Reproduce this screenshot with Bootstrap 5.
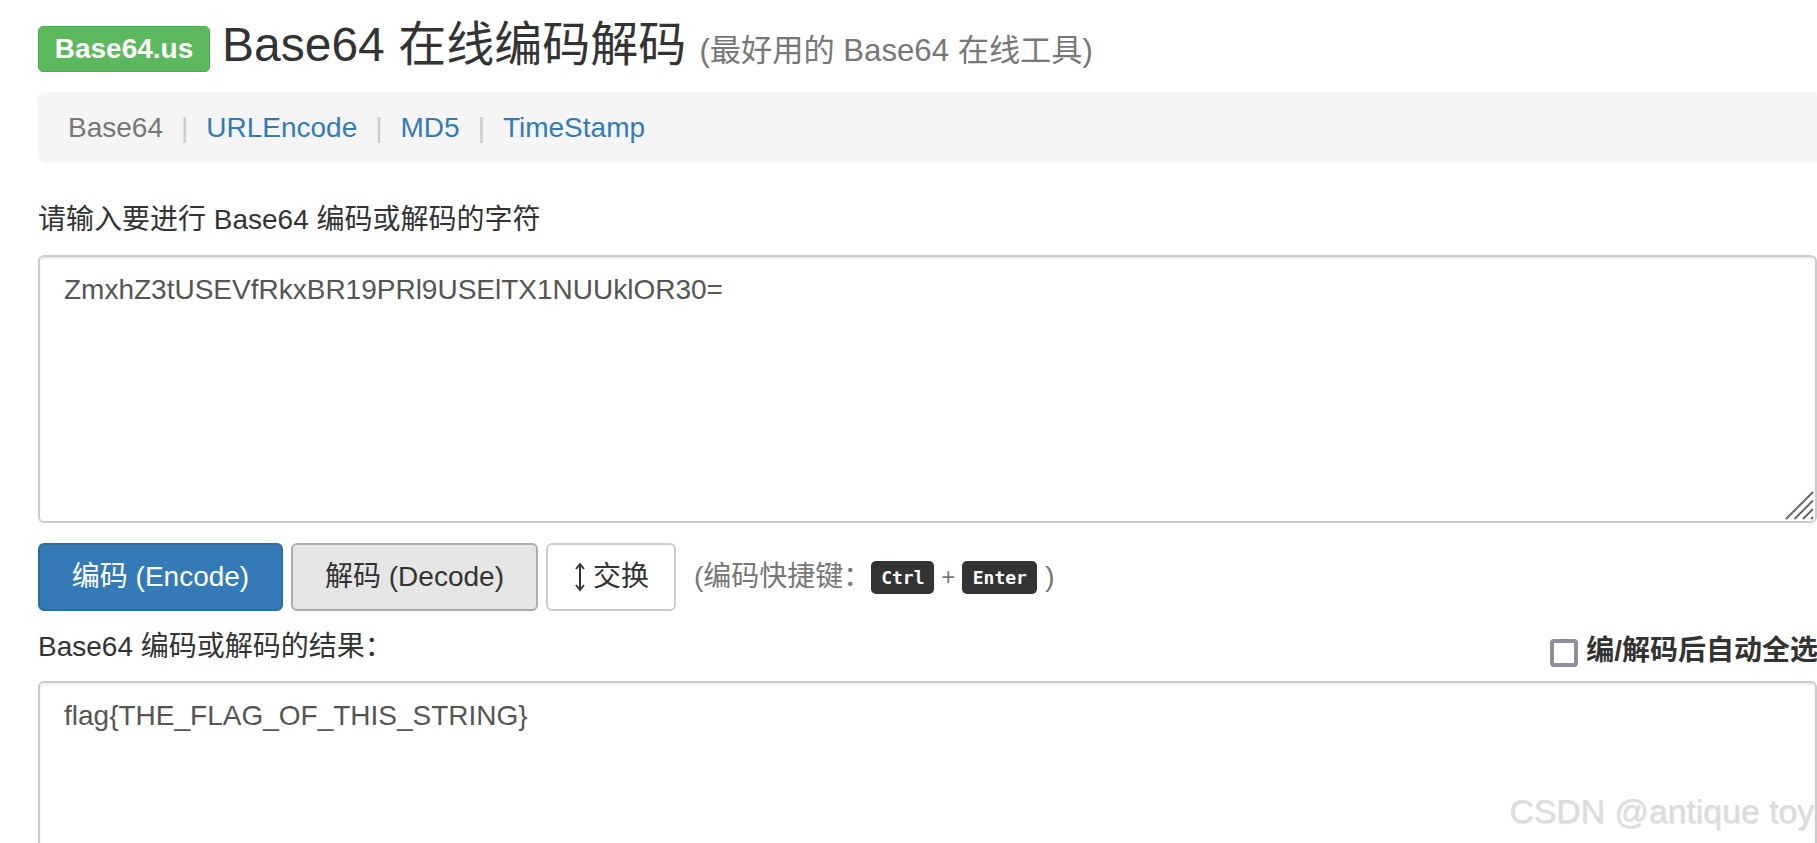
<!DOCTYPE html>
<html lang="zh-CN">
<head>
    <meta charset="UTF-8" />
    <title>Base64 在线编码解码</title>
    <link href="https://cdn.jsdelivr.net/npm/bootstrap@5.3.2/dist/css/bootstrap.min.css" rel="stylesheet">
    <style>
        html, body { height: 843px; overflow: hidden; }
        body { font-family: "Liberation Sans", "Noto Sans CJK SC", sans-serif; font-size: 28px; color: #333; }
        .page-wrap { padding-left: 38px; padding-top: 14px; position: relative; height: 843px; overflow: hidden; }
        .site-head { height: 78px; gap: 12px; }
        .site-logo { background: #5cb85c; border: 1px solid #4cae4c; color: #fff; font-weight: 700; font-size: 28px; border-radius: 5px; width: 172px; height: 46px; margin-top: 12px; }
        .site-title { font-size: 48px; font-weight: 400; line-height: 62px; margin: 0; color: #333; }
        .site-title small { font-size: 31.2px; font-weight: 400; color: #777; }
        .crumb-bar { background: #f5f5f5; border-radius: 7px; height: 71px; padding-left: 30px; margin-bottom: 38px; font-size: 28px; margin-right: -4px; }
        .crumb-bar .sep { color: #ccc; padding: 0 18px; }
        .crumb-bar a { color: #337ab7; text-decoration: none; }
        .crumb-bar .now { color: #777; }
        .field-label { line-height: 38px; margin-bottom: 16px; }
        .text-box { height: 268px; border: 2px solid #ccc; border-radius: 6px; box-shadow: inset 0 2px 2px rgba(0,0,0,.075); padding: 14px 24px; font-size: 28px; color: #555; line-height: 38px; resize: none; width: 100%; display: block; }
        .box-wrap { position: relative; }
        .grip { position: absolute; right: 3px; bottom: 3px; width: 29px; height: 29px; }
        .btn-row { margin-top: 20px; height: 68px; gap: 8px; }
        .act-btn { font-size: 28px; height: 68px; border-width: 2px; border-radius: 6px; line-height: 1; padding: 0; }
        .act-encode { width: 245px; background: #337ab7; border-color: #2e6da4; color: #fff; }
        .act-decode { width: 247px; background: #e6e6e6; border-color: #adadad; color: #333; }
        .act-swap { width: 130px; background: #fff; border-color: #ccc; color: #333; }
        .swap-arrow { width: 14px; height: 30px; vertical-align: -6px; margin-right: 6px; }
        .shortcut { color: #777; margin-left: 10px; }
        .key-cap { background: #333; color: #fff; font-family: "DejaVu Sans Mono", monospace; font-size: 18px; font-weight: 700; border-radius: 5px; height: 33px; display: inline-flex; align-items: center; justify-content: center; }
        .key-ctrl { width: 63px; }
        .key-enter { width: 75px; }
        .plus-mark { font-size: 24px; padding: 0 7px; }
        .result-row { height: 70px; }
        .result-label { line-height: 38px; margin-top: 17px; }
        .auto-check { font-weight: 700; font-size: 28px; line-height: 24px; white-space: nowrap; margin-top: 28px; margin-right: -1px; gap: 8px; }
        .check-box { width: 28px; height: 28px; border: 4px solid #8e8e9e; border-radius: 4px; background: #fff; flex: none; }
        .text-box-2 { height: 170px; }
        .wm-text { position: absolute; right: 3px; bottom: 12px; font-size: 33.8px; line-height: 40px; color: #dcdcdc; text-shadow: 1px 1px 1px #e4e4e4; font-family: "Liberation Sans", sans-serif; white-space: nowrap; }
    </style>
</head>
<body>
<div class="page-wrap">

    <!-- header -->
    <div class="d-flex align-items-start site-head">
        <div class="site-logo d-flex align-items-center justify-content-center">Base64.us</div>
        <h1 class="site-title">Base64 在线编码解码 <small>(最好用的 Base64 在线工具)</small></h1>
    </div>

    <!-- nav -->
    <div class="crumb-bar d-flex align-items-center">
        <span class="now">Base64</span><span class="sep">|</span>
        <a href="#">URLEncode</a><span class="sep">|</span>
        <a href="#">MD5</a><span class="sep">|</span>
        <a href="#">TimeStamp</a>
    </div>

    <div class="field-label">请输入要进行 Base64 编码或解码的字符</div>
    <div class="box-wrap">
        <textarea class="text-box">ZmxhZ3tUSEVfRkxBR19PRl9USElTX1NUUklOR30=</textarea>
        <svg class="grip" viewBox="0 0 29 29" fill="none" stroke="#666" stroke-width="2">
            <path d="M1 28 L28 1 M9.5 28 L28 9.5 M18 28 L28 18 M26 28 L28 26"/>
        </svg>
    </div>

    <div class="d-flex align-items-center btn-row">
        <button class="btn act-btn act-encode">编码 (Encode)</button>
        <button class="btn act-btn act-decode">解码 (Decode)</button>
        <button class="btn act-btn act-swap"><svg class="swap-arrow" viewBox="0 0 14 30" fill="none" stroke="#333" stroke-width="2"><path d="M7 2 V28 M3 7 L7 2 L11 7 M3 23 L7 28 L11 23"/></svg>交换</button>
        <div class="shortcut d-flex align-items-center">
            <span>(编码快捷键：</span>
            <span class="key-cap key-ctrl">Ctrl</span>
            <span class="plus-mark">+</span>
            <span class="key-cap key-enter">Enter</span>
            <span class="ms-2">)</span>
        </div>
    </div>

    <div class="d-flex justify-content-between result-row">
        <div class="result-label">Base64 编码或解码的结果：</div>
        <div class="auto-check d-flex align-items-start"><span class="check-box"></span><span>编/解码后自动全选</span></div>
    </div>

    <div class="box-wrap">
        <textarea class="text-box text-box-2">flag{THE_FLAG_OF_THIS_STRING}</textarea>
    </div>

    <div class="wm-text">CSDN @antique toy</div>
</div>
<script src="https://cdn.jsdelivr.net/npm/bootstrap@5.3.2/dist/js/bootstrap.bundle.min.js"></script>
</body>
</html>
